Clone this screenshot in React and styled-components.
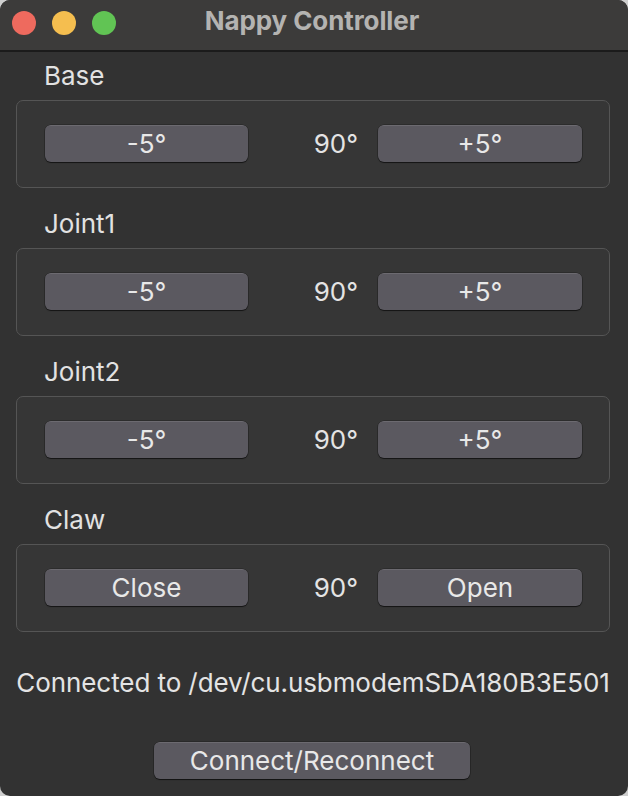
import React from "react";
import styled, { createGlobalStyle } from "styled-components";

const Global = createGlobalStyle`
  html, body { margin: 0; padding: 0; background: #cfcfcf; }
  body { font-family: Inter, "Liberation Sans", sans-serif; }
  * { box-sizing: border-box; }
`;

const Window = styled.div`
  width: 628px;
  height: 796px;
  background: #323232;
  border-radius: 10px;
  overflow: hidden;
  display: flex;
  flex-direction: column;
  color: #e4e4e4;
`;

const TitleBar = styled.div`
  height: 52px;
  flex: none;
  background: #3c3b3a;
  border-bottom: 2px solid #1b1b1b;
  display: grid;
  grid-template-columns: 1fr auto 1fr;
  align-items: center;
`;

const Lights = styled.div`
  display: flex;
  gap: 16px;
  padding-left: 12px;
  margin-top: -4px;
`;

const Light = styled.span`
  width: 24px;
  height: 24px;
  border-radius: 50%;
  background: ${(p) => p.$color};
`;

const Title = styled.div`
  font-size: 26px;
  font-weight: 700;
  color: #b4b3b1;
  margin-top: -9px;
  margin-left: -4px;
  letter-spacing: -0.1px;
`;

const Content = styled.div`
  flex: 1;
  display: flex;
  flex-direction: column;
  padding: 8px 18px 17px 16px;
`;

const Section = styled.section`
  display: flex;
  flex-direction: column;
  gap: 8px;
  margin-bottom: 20px;
`;

const Label = styled.div`
  font-size: 26px;
  line-height: 32px;
  padding-left: 28px;
  color: #e2e2e2;
`;

const Box = styled.div`
  height: 88px;
  border: 1px solid #555555;
  border-radius: 7px;
  background: #363636;
  display: grid;
  grid-template-columns: 203px 1fr 204px;
  column-gap: 20px;
  align-items: center;
  padding: 0 27px 2px 28px;
`;

const Button = styled.button`
  height: 37px;
  width: ${(p) => p.$width || "auto"};
  border: none;
  border-top: 1px solid #6c6a70;
  border-radius: 6px;
  background: #5b5960;
  box-shadow: 0 1px 1px rgba(0, 0, 0, 0.55), 0 0 0 0.5px rgba(0, 0, 0, 0.35);
  color: #e8e8e8;
  font-family: Inter, "Liberation Sans", sans-serif;
  font-size: 26px;
  line-height: 34px;
  padding: 0;
  cursor: default;
`;

const Value = styled.div`
  font-size: 26px;
  text-align: right;
  color: #e4e4e4;
`;

const Status = styled.div`
  margin-top: 15px;
  font-size: 26px;
  line-height: 32px;
  text-align: center;
  color: #e4e4e4;
  white-space: nowrap;
  letter-spacing: -0.08px;
  padding-left: 0;
`;

const Footer = styled.div`
  margin-top: auto;
  display: flex;
  justify-content: center;
  padding-right: 2px;
`;

const sections = [
  { name: "Base", minus: "-5°", plus: "+5°" },
  { name: "Joint1", minus: "-5°", plus: "+5°" },
  { name: "Joint2", minus: "-5°", plus: "+5°" },
  { name: "Claw", minus: "Close", plus: "Open" },
];

export default function App() {
  return (
    <>
      <Global />
      <Window>
        <TitleBar>
          <Lights>
            <Light $color="#ee6a5e" />
            <Light $color="#f5be4f" />
            <Light $color="#61c454" />
          </Lights>
          <Title>Nappy Controller</Title>
          <div />
        </TitleBar>
        <Content>
          {sections.map((s) => (
            <Section key={s.name}>
              <Label>{s.name}</Label>
              <Box>
                <Button>{s.minus}</Button>
                <Value>90°</Value>
                <Button>{s.plus}</Button>
              </Box>
            </Section>
          ))}
          <Status>Connected to /dev/cu.usbmodemSDA180B3E501</Status>
          <Footer>
            <Button $width="316px">Connect/Reconnect</Button>
          </Footer>
        </Content>
      </Window>
    </>
  );
}
